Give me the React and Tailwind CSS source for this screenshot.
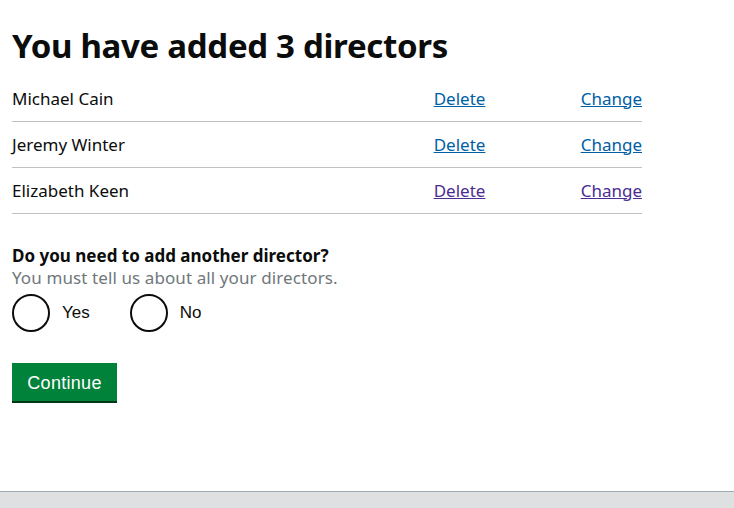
import React from 'react'

const directors = [
  { name: 'Michael Cain', visited: false },
  { name: 'Jeremy Winter', visited: false },
  { name: 'Elizabeth Keen', visited: true },
]

function Radio({ label }) {
  return (
    <label className="flex items-center gap-3">
      <span className="w-[38px] h-[38px] rounded-full border-2 border-[#0b0c0c] bg-white" />
      <span className="text-[17px] text-[#0b0c0c] font-['Liberation_Sans',sans-serif]">{label}</span>
    </label>
  )
}

export default function App() {
  return (
    <div className="min-h-[508px] flex flex-col bg-white font-['Noto_Sans',sans-serif] text-[#0b0c0c]">
      <main className="flex-1 px-3">
        <h1 className="pt-[26px] text-[33px] leading-[40px] font-bold tracking-[-0.3px]">You have added 3 directors</h1>
        <div className="w-[630px] mt-[10px]">
          {directors.map(d => {
            const link = d.visited ? 'text-[#4c2c92]' : 'text-[#005ea5]'
            return (
              <div key={d.name} className="flex items-center h-[46px] border-b border-[#bfc1c3] text-[17px]">
                <span className="flex-1">{d.name}</span>
                <a href="#" className={`w-[147px] underline ${link}`}>Delete</a>
                <a href="#" className={`underline ${link}`}>Change</a>
              </div>
            )
          })}
        </div>
        <fieldset className="mt-[31px]">
          <legend className="text-[17px] font-bold leading-[22px]">Do you need to add another director?</legend>
          <p className="text-[17px] leading-[22px] text-[#6f777b] tracking-[0.1px]">You must tell us about all your directors.</p>
          <div className="flex gap-[40px] mt-[5px]">
            <Radio label="Yes" />
            <Radio label="No" />
          </div>
        </fieldset>
        <button className="mt-[31px] h-[38px] w-[105px] bg-[#00823b] text-white text-[18px] leading-[38px] font-['Liberation_Sans',sans-serif] shadow-[0_2px_0_#003618]">
          <span className="relative top-[1px] tracking-[0.3px]">Continue</span>
        </button>
      </main>
      <footer className="h-[17px] bg-[#dee0e2] border-t border-[#a1acb2]" />
    </div>
  )
}
